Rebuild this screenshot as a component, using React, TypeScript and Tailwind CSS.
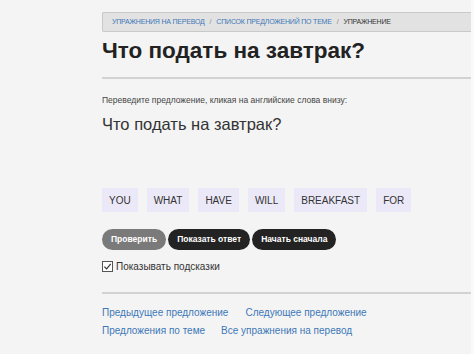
const words = ['YOU', 'WHAT', 'HAVE', 'WILL', 'BREAKFAST', 'FOR']

export default function App() {
  return (
    <div className="h-[354px] w-[474px] overflow-hidden bg-[#f4f4f4] font-['Liberation_Sans',Arial,sans-serif]">
      <div className="flex h-full">
        <div className="flex flex-1 flex-col pl-[102px] pt-[12px]">
          {/* breadcrumb */}
          <div className="flex h-[20px] items-center gap-[5px] rounded-l-[2px] border border-r-0 border-[#c9c9c9] bg-[#e2e2e2] pl-[9px] text-[7px] uppercase tracking-[-0.2px]">
            <span className="text-[#3d78b8]">Упражнения на перевод</span>
            <span className="text-[#888]">/</span>
            <span className="text-[#3d78b8]">Список предложений по теме</span>
            <span className="text-[#888]">/</span>
            <span className="text-[#333]">Упражнение</span>
          </div>

          <h1 className="mt-[5px] text-[22.5px] font-bold leading-[28px] text-[#222]">Что подать на завтрак?</h1>
          <div className="mt-[12px] h-[2px] bg-[#d2d2d2]" />

          <p className="mt-[15px] text-[8.5px] leading-[12px] text-[#444]">
            Переведите предложение, кликая на английские слова внизу:
          </p>
          <p className="mt-[6px] text-[16.5px] leading-[24px] text-[#333]">Что подать на завтрак?</p>

          <div className="mt-[52px] flex gap-[9px]">
            {words.map((w) => (
              <div key={w} className="flex h-[24px] items-center bg-[#ebe9f8] px-[7px] text-[10px] text-[#333]">
                {w}
              </div>
            ))}
          </div>

          <div className="mt-[17px] flex gap-[2px] text-[8.5px] font-bold text-white">
            <div className="flex h-[21px] items-center rounded-full bg-[#7a7a7a] px-[9px]">Проверить</div>
            <div className="flex h-[21px] items-center rounded-full bg-[#232323] px-[9px]">Показать ответ</div>
            <div className="flex h-[21px] items-center rounded-full bg-[#232323] px-[9px]">Начать сначала</div>
          </div>

          <label className="mt-[9px] flex h-[14px] items-center gap-[3px] text-[10px] text-[#333]">
            <span className="flex h-[11px] w-[11px] items-center justify-center border border-[#555] bg-white">
              <svg width="9" height="9" viewBox="0 0 10 10" fill="none">
                <path d="M1.5 5.2 L4 7.6 L8.6 2.2" stroke="#333" strokeWidth="1.3" />
              </svg>
            </span>
            Показывать подсказки
          </label>

          <div className="mt-[19px] h-[2px] bg-[#d2d2d2]" />

          <div className="mt-[12px] flex gap-[17px] text-[10px] leading-[14px] text-[#3d78b8]">
            <span>Предыдущее предложение</span>
            <span>Следующее предложение</span>
          </div>
          <div className="mt-[4px] flex gap-[16px] text-[10px] leading-[14px] text-[#3d78b8]">
            <span>Предложения по теме</span>
            <span>Все упражнения на перевод</span>
          </div>
        </div>
        <div className="w-[3px] bg-[#fafafa]" />
      </div>
    </div>
  )
}
